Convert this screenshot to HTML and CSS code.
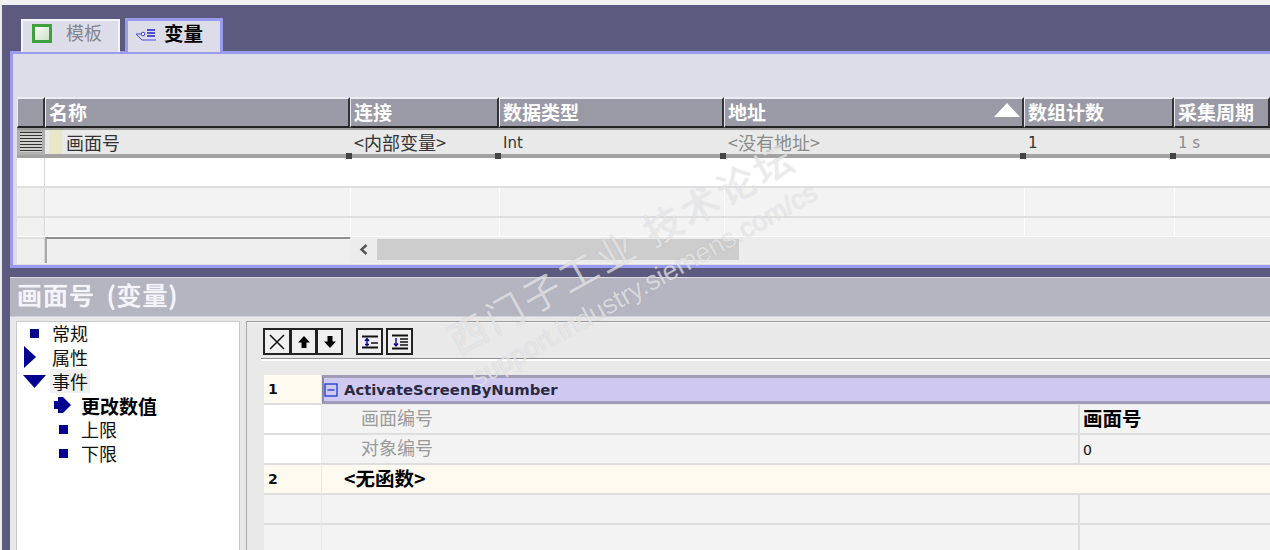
FILE: index.html
```html
<!DOCTYPE html>
<html lang="zh">
<head>
<meta charset="utf-8">
<title>变量</title>
<link rel="stylesheet" href="styles.css">
</head>
<body>
<div class="app">
  <div class="topstrip"></div>
  <div class="work">
    <div class="tabs">
      <div class="tab tab-off">
        <svg class="tab-ico" width="20" height="19" viewBox="0 0 20 19"><defs><linearGradient id="tabfill" x1="0" y1="0" x2="1" y2="1"><stop offset="0" stop-color="#ffffff"/><stop offset="1" stop-color="#c6dfc0"/></linearGradient></defs><rect x="1.500" y="1.500" width="17" height="16" fill="url(#tabfill)" stroke="#3fa03f" stroke-width="3"/></svg>
        <span class="tab-text">模板</span>
      </div>
      <div class="tab tab-on">
        <svg class="tab-ico2" width="22" height="14" viewBox="0 0 22 14"><path d="M1 6h6M1 6l6 6h14" fill="none" stroke="#4a4ae0" stroke-width="1"/><circle cx="8" cy="6" r="1.800" fill="#fff" stroke="#3a3ad0"/><path d="M12 2h8M12 5h8M12 8h8" stroke="#2020c0" stroke-width="1.500"/></svg>
        <span class="tab-text-on">变量</span>
      </div>
    </div>

    <section class="top-panel">
      <div class="grid-wrap">
        <div class="grid-row head">
          <div class="c sel hd"></div>
          <div class="c hd"><span>名称</span></div>
          <div class="c hd"><span>连接</span></div>
          <div class="c hd"><span>数据类型</span></div>
          <div class="c hd addr"><span>地址</span><svg class="sort" width="28" height="15" viewBox="0 0 28 15"><path d="M1 15L14 1l13 14z" fill="#fff"/></svg></div>
          <div class="c hd"><span>数组计数</span></div>
          <div class="c hd"><span>采集周期</span></div>
        </div>
        <div class="grid-row active">
          <div class="c sel"><span class="lines"></span></div>
          <div class="c name"><span class="swatch"></span>画面号</div>
          <div class="c">&lt;内部变量&gt;<i class="h"></i></div>
          <div class="c lat">Int<i class="h"></i></div>
          <div class="c dim">&lt;没有地址&gt;<i class="h"></i></div>
          <div class="c lat">1<i class="h"></i></div>
          <div class="c lat dim">1 s<i class="h"></i></div>
        </div>
        <div class="grid-row blank white">
          <div class="c sel"></div><div class="c left-b"></div><div class="c"></div><div class="c"></div><div class="c"></div><div class="c"></div><div class="c"></div>
        </div>
        <div class="grid-row blank">
          <div class="c sel"></div><div class="c left-b"></div><div class="c"></div><div class="c"></div><div class="c"></div><div class="c"></div><div class="c"></div>
        </div>
        <div class="grid-row blank short">
          <div class="c sel"></div><div class="c left-b"></div><div class="c"></div><div class="c"></div><div class="c"></div><div class="c"></div><div class="c"></div>
        </div>
        <div class="grid-row scroll">
          <div class="c sel"></div>
          <div class="c frozen"></div>
          <div class="scrollbar">
            <span class="arrow"><svg width="12" height="13" viewBox="0 0 12 13"><path d="M8.500 2L3.500 6.500l5 4.500" fill="none" stroke="#555" stroke-width="2.400"/></svg></span>
            <span class="thumb"></span>
          </div>
        </div>
      </div>
    </section>

    <section class="bottom-panel">
      <h2 class="title">画面号 (变量)</h2>
      <div class="body">
        <nav class="tree">
          <div class="node"><span class="ico"><i class="sq"></i></span><span>常规</span></div>
          <div class="node"><span class="ico ico-right"><svg width="12" height="22" viewBox="0 0 12 22"><path d="M0 0l12 11L0 22z" fill="#000090"/></svg></span><span>属性</span></div>
          <div class="node"><span class="ico"><svg width="23" height="13" viewBox="0 0 23 13"><path d="M0 0h23L11.500 13z" fill="#000090"/></svg></span><span class="sel-node">事件</span></div>
          <div class="node sub"><span class="ico"><svg width="18" height="18" viewBox="0 0 18 18"><path d="M0 5h4V1h5l8 8-8 8H4v-4H0z" fill="#000090"/></svg></span><b>更改数值</b></div>
          <div class="node sub"><span class="ico"><i class="sq"></i></span><span>上限</span></div>
          <div class="node sub"><span class="ico"><i class="sq"></i></span><span>下限</span></div>
        </nav>
        <div class="detail">
          <div class="toolbar">
            <div class="btn-group">
              <span class="btn"><svg width="20" height="20" viewBox="0 0 20 20"><path d="M3 3l14 14M17 3L3 17" stroke="#111" stroke-width="1.500"/></svg></span>
              <span class="btn"><svg width="16" height="16" viewBox="0 0 16 16"><path d="M8 2L14 8.500H10.500V14H5.500V8.500H2z" fill="#000"/></svg></span>
              <span class="btn"><svg width="16" height="16" viewBox="0 0 16 16"><path d="M8 14L14 7.500H10.500V2H5.500V7.500H2z" fill="#000"/></svg></span>
            </div>
            <div class="btn-group">
              <span class="btn wide"><svg width="20" height="18" viewBox="0 0 20 18"><path d="M2 3.500h16M2 14.500h16" stroke="#111" stroke-width="2"/><path d="M7 5.500v8M5 8l2-2.500L9 8M5 11.500h4" fill="none" stroke="#0000a0" stroke-width="1.400"/><path d="M11 10h7" stroke="#111" stroke-width="1.500"/></svg></span>
              <span class="btn wide"><svg width="20" height="18" viewBox="0 0 20 18"><path d="M2 2.500h16M2 15.500h16" stroke="#111" stroke-width="2"/><path d="M10 6h8M10 9h8M10 12h8" stroke="#111" stroke-width="1.400"/><path d="M6 5v8M4 10.500L6 13l2-2.500" fill="none" stroke="#0000a0" stroke-width="1.400"/></svg></span>
            </div>
          </div>
          <div class="fn-table">
            <div class="fn-row">
              <div class="idx cream"><b>1</b></div>
              <div class="fn-head"><svg width="14" height="14" viewBox="0 0 14 14"><rect x="1" y="1" width="12" height="12" fill="none" stroke="#1a3ad0" stroke-width="1.300"/><path d="M3.500 7h7" stroke="#1a3ad0" stroke-width="1.300"/></svg><b>ActivateScreenByNumber</b></div>
            </div>
            <div class="fn-row">
              <div class="idx"></div>
              <div class="param"><span>画面编号</span></div>
              <div class="val"><b>画面号</b></div>
            </div>
            <div class="fn-row">
              <div class="idx"></div>
              <div class="param"><span>对象编号</span></div>
              <div class="val lat">0</div>
            </div>
            <div class="fn-row">
              <div class="idx cream"><b>2</b></div>
              <div class="nofn"><b>&lt;无函数&gt;</b></div>
            </div>
            <div class="fn-row">
              <div class="idx gray"></div>
              <div class="param"></div>
              <div class="val"></div>
            </div>
            <div class="fn-row">
              <div class="idx gray"></div>
              <div class="param"></div>
              <div class="val"></div>
            </div>
          </div>
        </div>
      </div>
    </section>
  </div>
  <div class="mark mark-a">西门子工业 技术论坛</div>
  <div class="mark mark-b">support.industry.siemens.com/cs</div>
</div>
</body>
</html>
```
FILE: styles.css
```css
* { box-sizing: border-box; }
html, body { margin: 0; padding: 0; }
body {
  font-family: "Noto Sans CJK SC", "Liberation Sans", sans-serif;
  font-size: 18px;
  color: #222;
  background: #5c5a7e;
}
.app {
  position: relative;
  width: 1270px;
  height: 550px;
  overflow: hidden;
  background: #5c5a7e;
  border-left: 2px solid #ececec;
}
.topstrip { height: 5px; margin-left: -2px; background: #f0f0f0; }
.work { padding-left: 8px; }

/* tabs */
.tabs { display: flex; height: 47px; align-items: flex-end; padding-left: 11px; gap: 5px; }
.tab { display: flex; align-items: center; height: 34px; }
.tab-off {
  width: 99px; height: 33px;
  background: #dddde9;
  border: 2px solid #f3f3f8; border-bottom: 0;
  padding: 0 0 10px 9px;
  gap: 14px;
}
.tab-ico { flex: none; margin-top: 3px; }
.tab-text { color: #85858f; font-size: 18px; line-height: 1; }
.tab-on {
  width: 98px;
  background: #dddde9;
  border: 3px solid #9a9aee; border-bottom: 0;
  padding: 0 0 7px 7px;
  gap: 7px;
}
.tab-ico2 { flex: none; margin-top: 4px; }
.tab-text-on { color: #000; font-size: 19.500px; font-weight: 700; line-height: 1; }

/* top panel */
.top-panel {
  height: 217px;
  margin-top: -1px;
  background: #dddde9;
  border: solid #9a9aee;
  border-width: 3px 0 3px 3px;
  padding: 43px 0 0 4px;
  overflow: hidden;
}
.grid-wrap { background: #f0f0f0; height: 167px; }
.grid-row {
  display: grid;
  grid-template-columns: 28px 305px 149px 225px 300px 150px 1fr;
}
.c {
  position: relative;
  display: flex;
  align-items: center;
  white-space: nowrap;
  padding-left: 4px;
  min-width: 0;
}
.head { height: 31px; }
.hd {
  background: #9a9aa6;
  color: #fff;
  font-weight: 700;
  font-size: 19px;
  line-height: 1;
  border-top: 2px solid #ececf2;
  border-left: 1px solid #e8e8ee;
  border-right: 2px solid #333;
  border-bottom: 2px solid #222;
  padding: 0 0 3px 3px;
}
.addr { justify-content: space-between; padding-right: 1px; padding-bottom: 0; }
.addr span { margin-bottom: 3px; }
.sort { flex: none; margin-bottom: 6px; }

.active { height: 30px; background: #e9e9e9; border-top: 2px solid #9c9c9c; border-bottom: 4px solid #a2a2a2; font-size: 18px; line-height: 1; }
.active .sel { background: #b0b0b0; padding: 0; justify-content: center; }
.lines {
  width: 22px; height: 20px;
  background: repeating-linear-gradient(#333 0 1px, #d0d0d0 1px 3px);
}
.active .c { color: #333; padding-bottom: 1px; }
.active .name { padding: 0 0 1px; gap: 4px; align-self: stretch; }
.swatch { width: 13px; height: 24px; background: #e8e8c8; margin-left: 4px; }
.active .dim { color: #8b8b8b; }
.active .lat { font-family: "DejaVu Sans", "Liberation Sans", sans-serif; font-size: 15px; padding-bottom: 0; padding-top: 1px; }
.h {
  position: absolute; left: -4px; bottom: -4px; z-index: 1;
  width: 6px; height: 6px; background: #444;
}

.blank { height: 30px; background: #f3f3f3; border-bottom: 2px solid #dfdfdf; }
.blank .c { border-left: 1px solid #fff; }
.blank .sel { border-left: 0; background: #f0f0f0; border-right: 1px solid #d8d8d8; }
.blank .left-b { border-left: 0; border-right: 1px solid #bdbdbd; margin-right: -1px; }
.white { background: #fff; }
.white .sel { background: #fff; }
.white .c { border-left-color: #fff; }
.short { height: 19px; border-bottom: 1px solid #fff; }
.scroll { height: 26px; background: #ececec; }
.scroll .sel { background: #efefef; border-right: 1px solid #d8d8d8; border-top: 2px solid #dfdfdf; }
.frozen { border-top: 2px solid #8e8e8e; border-left: 2px solid #a8a8a8; background: #efefef; }
.scrollbar { grid-column: 3 / -1; display: flex; align-items: stretch; padding-bottom: 3px; padding-top: 2px; }
.arrow { width: 27px; display: flex; align-items: center; justify-content: center; }
.thumb { width: 362px; background: #cdcdcd; }

/* bottom panel */
.bottom-panel {
  margin-top: 9px;
  height: 274px;
  border-top: 1px solid #dcdce4;
  background: #e8e8e8;
}
.title {
  margin: 0;
  height: 39px;
  background: #b5b5c1;
  color: #f4f4fa;
  font-size: 25px;
  letter-spacing: 1px;
  word-spacing: 5px;
  font-weight: 500;
  line-height: 32px;
  padding-left: 7px;
  border-bottom: 1px solid #d0d0d8;
  text-shadow: 0 0 1px #fff;
}
.body { display: flex; height: 234px; padding: 4px 0 0 6px; gap: 6px; }
.tree {
  width: 224px; flex: none;
  background: #fff;
  border: 1px solid #c8c8c8;
  border-bottom: 0;
  padding-top: 1px;
}
.node { display: flex; align-items: center; height: 24px; line-height: 1; font-size: 18px; color: #111; padding-bottom: 4px; }
.ico { width: 35px; flex: none; display: flex; align-items: center; justify-content: center; }
.ico-right { justify-content: flex-start; padding-left: 7px; }
.sq { display: block; width: 9px; height: 9px; background: #000090; }
.sel-node { background: #f0f0f0; padding: 3px 2px; margin-left: -2px; }
.sub { padding-left: 28px; }
.sub .ico { width: 36px; }
.sub b { font-weight: 700; font-size: 19px; color: #000; }

.detail { flex: 1; min-width: 0; border: 1px solid #a8a8a8; border-right: 0; border-bottom: 0; border-top-color: #9a9a9a; padding: 6px 0 0 16px; background: #e9e9e9; box-shadow: inset 0 1px 0 #f4f4f4; }
.toolbar {
  display: flex;
  gap: 13px;
  height: 33px;
  align-items: flex-start;
  position: relative;
}
.toolbar::after { content: ""; position: absolute; left: -2px; right: 0; bottom: 0; height: 3px; background: linear-gradient(#8e8e8e 0 1px, #fff 1px); }
.btn-group { display: flex; height: 27px; }
.btn-group + .btn-group { gap: 3px; }
.btn { width: 27px; height: 27px; border: 2px solid #222; background: #f0f0f0; display: flex; align-items: center; justify-content: center; margin-left: -1px; }
.btn:first-child { margin-left: 0; width: 28px; }
.btn-group + .btn-group .btn { margin-left: 0; width: 27px; }
.fn-table { margin-top: 14px; margin-left: 1px; display: flex; flex-direction: column; }
.fn-row { display: flex; height: 30px; }
.idx {
  width: 57px; margin-right: 1px; flex: none;
  background: #fff;
  border-bottom: 2px solid #dedede;
  font-family: "DejaVu Sans", sans-serif;
  font-size: 14px;
  padding-left: 4px;
  display: flex; align-items: center;
  color: #111;
}
.cream { background: #fffaf0; }
.gray { background: #f3f3f3; }
.fn-head {
  flex: 1;
  display: flex; align-items: center; gap: 6px;
  background: #cfc9f2;
  border-top: 3px solid #a09cb8;
  border-bottom: 3px solid #a09cb8;
  border-left: 2px solid #8a8aa0;
  margin-bottom: 1px;
  font-family: "DejaVu Sans", sans-serif;
  font-size: 14.800px;
  color: #2a2a40;
}
.fn-head b { font-weight: 700; }
.param {
  width: 758px; flex: none;
  background: #f3f3f3;
  border-bottom: 2px solid #dedede;
  border-right: 2px solid #dedede;
  padding: 0 0 4px 39px;
  display: flex; align-items: center;
  font-size: 18px; color: #9a9a9a; line-height: 1;
}
.val {
  flex: 1;
  background: #f3f3f3;
  border-bottom: 2px solid #dedede;
  padding: 0 0 3px 3px;
  display: flex; align-items: center;
  color: #111; line-height: 1;
}
.val.lat { font-family: "DejaVu Sans", sans-serif; font-size: 14px; padding: 1px 0 0 3px; }
.val b { font-weight: 700; font-size: 19.500px; color: #000; }
.nofn {
  flex: 1;
  background: #fffaf0;
  border-bottom: 2px solid #dedede;
  padding: 0 0 3px 22px;
  display: flex; align-items: center;
  font-size: 19.500px; color: #000; line-height: 1;
}

/* watermark over the screenshot */
.mark {
  position: absolute;
  white-space: nowrap;
  color: rgba(255, 255, 255, 0.6);
  text-shadow: 0 0 1px rgba(110, 110, 120, 0.35);
  transform-origin: 0 100%;
  transform: rotate(-29deg);
  line-height: 1;
  pointer-events: none;
}
.mark-a { left: 458px; top: 320px; font-size: 38px; letter-spacing: 4px; font-weight: 400; }
.mark-b { left: 478px; top: 365px; font-size: 27px; font-family: "Liberation Sans", sans-serif; }
```
